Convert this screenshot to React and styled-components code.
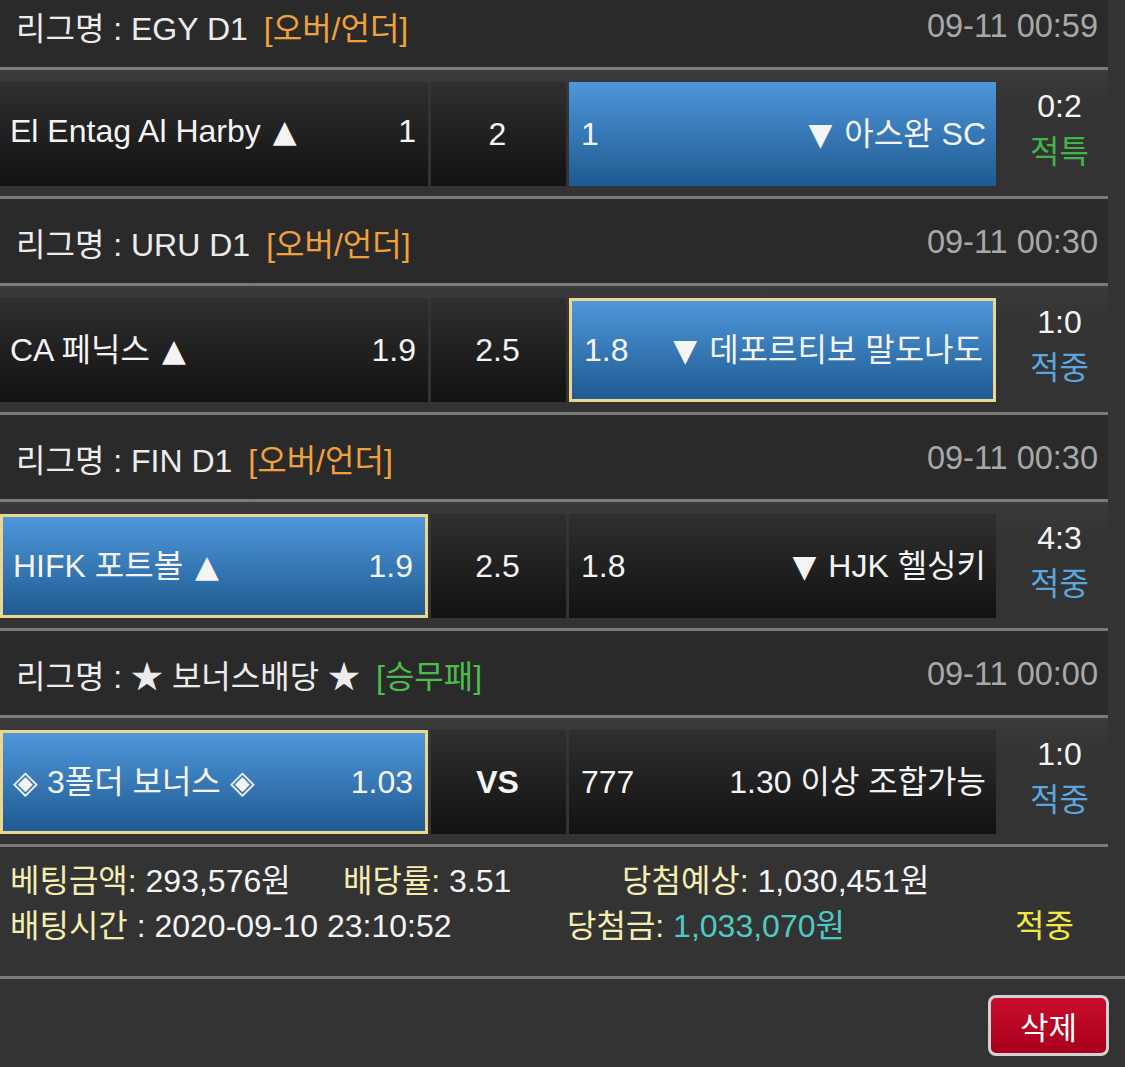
import React from "react";
import styled, { createGlobalStyle } from "styled-components";

const GlobalStyle = createGlobalStyle`
  html, body {
    margin: 0;
    padding: 0;
    background: #333333;
    font-family: "Liberation Sans", Arial, "Noto Sans CJK KR", sans-serif;
    color: #f2f2f2;
    overflow: hidden;
  }
`;

const matches = [
  {
    league: "EGY D1",
    type: "[오버/언더]",
    typeColor: "#f0a13c",
    time: "09-11 00:59",
    home: "El Entag Al Harby",
    homeMark: "▲",
    homeOdd: "1",
    draw: "2",
    awayOdd: "1",
    awayMark: "▼",
    away: "아스완 SC",
    pick: "away",
    picked: false,
    score: "0:2",
    result: "적특",
    resultColor: "#43b449",
  },
  {
    league: "URU D1",
    type: "[오버/언더]",
    typeColor: "#f0a13c",
    time: "09-11 00:30",
    home: "CA 페닉스",
    homeMark: "▲",
    homeOdd: "1.9",
    draw: "2.5",
    awayOdd: "1.8",
    awayMark: "▼",
    away: "데포르티보 말도나도",
    pick: "away",
    picked: true,
    score: "1:0",
    result: "적중",
    resultColor: "#5aa6de",
  },
  {
    league: "FIN D1",
    type: "[오버/언더]",
    typeColor: "#f0a13c",
    time: "09-11 00:30",
    home: "HIFK 포트볼",
    homeMark: "▲",
    homeOdd: "1.9",
    draw: "2.5",
    awayOdd: "1.8",
    awayMark: "▼",
    away: "HJK 헬싱키",
    pick: "home",
    picked: true,
    score: "4:3",
    result: "적중",
    resultColor: "#5aa6de",
  },
  {
    league: "★ 보너스배당 ★",
    type: "[승무패]",
    typeColor: "#4cbc4c",
    time: "09-11 00:00",
    home: "◈ 3폴더 보너스 ◈",
    homeOdd: "1.03",
    draw: "VS",
    drawBold: true,
    awayOdd: "777",
    away: "1.30 이상 조합가능",
    pick: "home",
    picked: true,
    score: "1:0",
    result: "적중",
    resultColor: "#5aa6de",
  },
];

const Page = styled.div`
  display: flex;
  flex-direction: column;
  margin-top: -17px;
`;

const List = styled.div`
  width: 1108px;
  display: flex;
  flex-direction: column;
`;

const LeagueHeader = styled.div`
  height: 84px;
  background: #2a2a2a;
  display: flex;
  align-items: center;
  justify-content: space-between;
  padding: 2px 10px 0 16px;
  box-sizing: border-box;
  font-size: 32px;
`;

const LeagueName = styled.div`
  color: #ececec;
  display: flex;
  align-items: baseline;
  white-space: pre;
`;

const BetType = styled.span`
  color: ${(p) => p.$color};
  margin-left: 16px;
`;

const Time = styled.div`
  color: #a8a8a8;
  font-size: 32.5px;
`;

const Divider = styled.div`
  height: 3px;
  background: #7a7a7a;
`;

const Row = styled.div`
  height: 126px;
  box-sizing: border-box;
  padding: 12px 0 10px;
  background: linear-gradient(#3a3a3a, #333333 30%);
  display: flex;
  gap: 3px;
`;

const Cell = styled.div`
  box-sizing: border-box;
  width: ${(p) => p.$w}px;
  display: flex;
  align-items: center;
  padding: 0 ${(p) => p.$pr || 12}px 6px ${(p) => p.$pl || 10}px;
  font-size: 32px;
  color: #f4f4f4;
  font-weight: ${(p) => (p.$bold ? 700 : 400)};
  background: ${(p) =>
    p.$active
      ? "linear-gradient(#4e97da, #1f5a91)"
      : "linear-gradient(#2f2f2f, #121212)"};
  border: ${(p) => (p.$picked ? "3px solid #ecd68f" : "none")};
  white-space: nowrap;
`;

const CellLine = styled.div`
  flex: 1;
  display: flex;
  align-items: baseline;
  justify-content: ${(p) => p.$justify || "space-between"};
  padding-top: ${(p) => p.$drop || 0}px;
`;

const Mark = styled.span`
  font-family: "DejaVu Sans", sans-serif;
  font-size: 31px;
  margin: ${(p) => (p.$after ? "0 0 0 12px" : "0 12px 0 0")};
`;

const ScoreCol = styled.div`
  flex: 1;
  display: flex;
  flex-direction: column;
  align-items: center;
  justify-content: center;
  padding-left: 12px;
  padding-bottom: 10px;
  font-size: 32px;
  line-height: 46px;
`;

const Score = styled.div`
  color: #f4f4f4;
`;

const Result = styled.div`
  color: ${(p) => p.$color};
`;

const Footer = styled.div`
  height: 129px;
  box-sizing: border-box;
  padding: 12px 0 0 10px;
  display: flex;
  flex-direction: column;
  font-size: 32px;
  line-height: 45px;
`;

const InfoRow = styled.div`
  display: flex;
  white-space: nowrap;
`;

const InfoItem = styled.div`
  width: ${(p) => (p.$w ? `${p.$w}px` : "auto")};
  color: ${(p) => p.$color || "#f4f4f4"};
`;

const Label = styled.span`
  color: #f3eeb0;
`;

const Value = styled.span`
  color: ${(p) => p.$color || "#f4f4f4"};
`;

const Actions = styled.div`
  display: flex;
  justify-content: flex-end;
  padding: 16px 16px 0 0;
`;

const DeleteButton = styled.button`
  width: 121px;
  height: 61px;
  box-sizing: border-box;
  border: 3px solid #d2d2d2;
  border-radius: 8px;
  background: linear-gradient(#c90c2c, #a8001c);
  color: #ffffff;
  font-family: "Liberation Sans", "Noto Sans CJK KR", sans-serif;
  font-size: 31px;
  padding: 0;
  cursor: pointer;
`;

function Match({ m }) {
  return (
    <>
      <LeagueHeader>
        <LeagueName>
          리그명 : {m.league}
          <BetType $color={m.typeColor}>{m.type}</BetType>
        </LeagueName>
        <Time>{m.time}</Time>
      </LeagueHeader>
      <Divider />
      <Row>
        <Cell $w={428} $active={m.pick === "home"} $picked={m.pick === "home" && m.picked}>
          <CellLine>
            <span>
              {m.home}
              {m.homeMark && <Mark $after>{m.homeMark}</Mark>}
            </span>
            <span>{m.homeOdd}</span>
          </CellLine>
        </Cell>
        <Cell $w={135} $pl={0} $pr={0} $bold={m.drawBold}>
          <CellLine $justify="center" $drop={7}>
            {m.draw}
          </CellLine>
        </Cell>
        <Cell $w={427} $active={m.pick === "away"} $picked={m.pick === "away" && m.picked} $pl={12} $pr={10}>
          <CellLine>
            <span>{m.awayOdd}</span>
            <span>
              {m.awayMark && <Mark>{m.awayMark}</Mark>}
              {m.away}
            </span>
          </CellLine>
        </Cell>
        <ScoreCol>
          <Score>{m.score}</Score>
          <Result $color={m.resultColor}>{m.result}</Result>
        </ScoreCol>
      </Row>
      <Divider />
    </>
  );
}

export default function App() {
  return (
    <Page>
      <GlobalStyle />
      <List>
        {matches.map((m, i) => (
          <Match key={i} m={m} />
        ))}
      </List>
      <Footer>
        <InfoRow>
          <InfoItem $w={333}>
            <Label>베팅금액:</Label> <Value>293,576원</Value>
          </InfoItem>
          <InfoItem $w={279}>
            <Label>배당률:</Label> <Value>3.51</Value>
          </InfoItem>
          <InfoItem>
            <Label>당첨예상:</Label> <Value>1,030,451원</Value>
          </InfoItem>
        </InfoRow>
        <InfoRow>
          <InfoItem $w={557}>
            <Label>배팅시간</Label> <Value>: 2020-09-10 23:10:52</Value>
          </InfoItem>
          <InfoItem $w={448}>
            <Label>당첨금:</Label> <Value $color="#4fc9c4">1,033,070원</Value>
          </InfoItem>
          <InfoItem $color="#f2e845">적중</InfoItem>
        </InfoRow>
      </Footer>
      <Divider />
      <Actions>
        <DeleteButton>삭제</DeleteButton>
      </Actions>
    </Page>
  );
}
